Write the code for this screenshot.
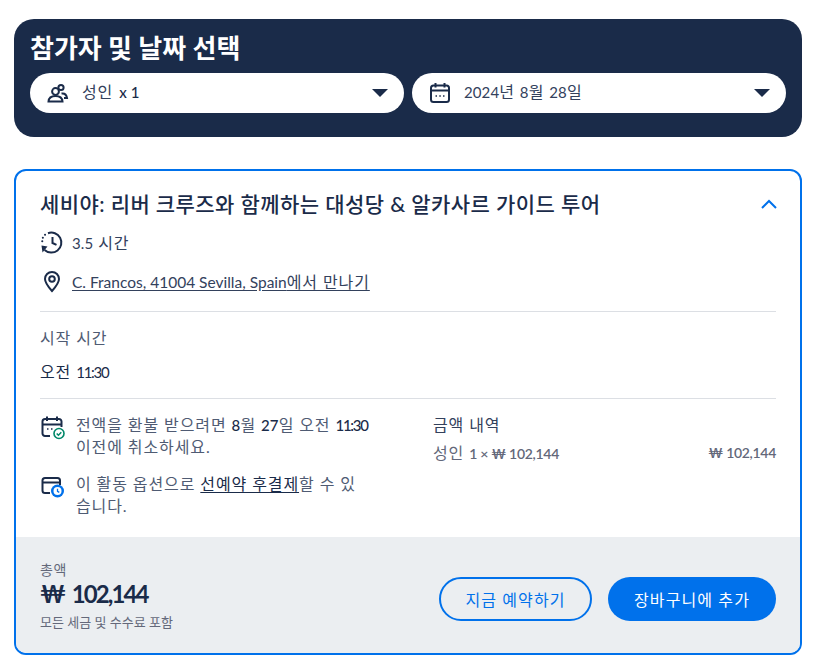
<main class="page">
  <section class="picker">
    <h2>참가자 및 날짜 선택</h2>
    <div class="pills">
      <div class="pill">
        <svg class="pill-ico" width="22" height="22" viewBox="0 0 22 22" fill="none" stroke="#1a2b49" stroke-width="2">
          <circle cx="8.500" cy="9.500" r="3.400"/>
          <circle cx="14" cy="5.500" r="2.600"/>
          <path d="M1.500 19.500c.3-3.800 3-5.500 7-5.500s6.700 1.700 7 5.500z"/>
          <path d="M14.500 11.500c3-.5 5 1.500 5.500 4.500h-3"/>
        </svg>
        <span class="pill-text">성인 <span class="n x">x 1</span></span>
        <span class="caret"></span>
      </div>
      <div class="pill">
        <svg class="pill-ico" width="22" height="22" viewBox="0 0 22 22" fill="none" stroke="#1a2b49" stroke-width="2">
          <rect x="2" y="3.500" width="18" height="16.500" rx="2.500"/>
          <path d="M2 8.500h18M6.500 1v4.500M15.500 1v4.500"/>
          <path d="M6.500 14h1.500M10.300 14h1.500M14 14h1.500" stroke-width="1.600"/>
        </svg>
        <span class="pill-text"><span class="n">2024</span>년 <span class="n">8</span>월 <span class="n">28</span>일</span>
        <span class="caret"></span>
      </div>
    </div>
  </section>

  <section class="card">
    <div class="body">
      <div class="title-row">
        <h3>세비야: 리버 크루즈와 함께하는 대성당 &amp; 알카사르 가이드 투어</h3>
        <svg width="18" height="10" viewBox="0 0 18 10" fill="none" stroke="#0071eb" stroke-width="2"><path d="M2 9l7-7 7 7"/></svg>
      </div>
      <div class="meta duration">
        <svg width="24" height="24" viewBox="0 0 24 24" fill="none" stroke="#1a2b49" stroke-width="2">
          <path d="M8 3.200A10 10 0 1 1 4.600 20" />
          <path d="M12.500 7v6l4 1.800"/>
          <path d="M2.200 11.200h.1M2.800 7.800h.1M5 4.800h.1" stroke-linecap="round"/>
          <path d="M1.500 15.500l6 1-5 6z" fill="#1a2b49" stroke="none"/>
        </svg>
        <span><span class="n">3.5</span> 시간</span>
      </div>
      <div class="meta place">
        <svg width="24" height="24" viewBox="0 0 24 24" fill="none" stroke="#1a2b49" stroke-width="2">
          <path d="M12 22c-4-4.500-7-8-7-12a7 7 0 0 1 14 0c0 4-3 7.500-7 12z"/>
          <circle cx="12" cy="10" r="2.800"/>
        </svg>
        <a href="#top"><span class="n addr">C. Francos, 41004 Sevilla, Spain</span>에서 만나기</a>
      </div>
      <hr class="first" />
      <div class="start">
        <div class="label">시작 시간</div>
        <div class="time">오전 <span class="n tight">11:30</span></div>
      </div>
      <hr class="second" />
      <div class="columns">
        <div class="notes">
          <div class="note">
            <svg width="26" height="26" viewBox="0 0 26 26" fill="none">
              <path d="M10 21H5a2.500 2.500 0 0 1-2.500-2.500V6.500A2.500 2.500 0 0 1 5 4h14a2.500 2.500 0 0 1 2.500 2.500V12M2.500 9.500h19M7 1.500v4.500M17 1.500v4.500" stroke="#1a2b49" stroke-width="2"/>
              <path d="M7 14h1.500M11 14h1.500" stroke="#1a2b49" stroke-width="1.600"/>
              <circle cx="19" cy="18.500" r="5" fill="#fff" stroke="#008768" stroke-width="1.600"/>
              <path d="M16.700 18.500l1.700 1.700 2.900-3" stroke="#008768" stroke-width="1.500"/>
            </svg>
            <p>전액을 환불 받으려면 <span class="n d">8</span>월 <span class="n d">27</span>일 오전 <span class="n d tight">11:30</span> 이전에 취소하세요.</p>
          </div>
          <div class="note">
            <svg width="26" height="26" viewBox="0 0 26 26" fill="none">
              <path d="M10 19H5a2.500 2.500 0 0 1-2.500-2.500v-10A2.500 2.500 0 0 1 5 4h12.500a2.500 2.500 0 0 1 2.500 2.500V11M2.500 8.500H20" stroke="#1a2b49" stroke-width="2"/>
              <circle cx="17.500" cy="17" r="6.500" fill="#0071eb"/>
              <circle cx="17.500" cy="17" r="4" fill="#fff"/>
              <path d="M17.500 14.800V17.400l1.800 1" stroke="#0071eb" stroke-width="1.300"/>
            </svg>
            <p>이 활동 옵션으로 <a href="#top">선예약 후결제</a>할 수 있습니다.</p>
          </div>
        </div>
        <div class="prices">
          <div class="price-title">금액 내역</div>
          <div class="price-row">
            <span>성인 <span class="n pr">1 × ₩ 102,144</span></span>
            <span class="n pr">₩ 102,144</span>
          </div>
        </div>
      </div>
    </div>
    <footer>
      <div class="total">
        <div class="total-label">총액</div>
        <div class="total-value">₩ <span class="digits">102,144</span></div>
        <div class="total-note">모든 세금 및 수수료 포함</div>
      </div>
      <div class="actions">
        <button class="outline">지금 예약하기</button>
        <button class="solid">장바구니에 추가</button>
      </div>
    </footer>
  </section>
</main>

<style>
  :global(body) {
    margin: 0;
    background: #fff;
  }
  .page {
    width: 788px;
    padding: 19px 0 0 14px;
    font-family: "Lato", "Noto Sans CJK KR", sans-serif;
    color: #1a2b49;
    font-size: 16px;
    letter-spacing: 0.9px;
  }
  .n {
    font-size: 15px;
    letter-spacing: 0.1px;
  }
  .tight {
    letter-spacing: -1.300px;
  }
  .picker {
    background: #1a2b49;
    border-radius: 20px;
    height: 118px;
    padding: 14px 16px 0;
    box-sizing: border-box;
  }
  h2 {
    margin: 0;
    color: #fff;
    font-size: 26px;
    font-weight: 700;
    line-height: 30px;
    height: 40px;
    letter-spacing: 0;
  }
  .pills {
    display: flex;
    gap: 8px;
  }
  .pill {
    flex: 1;
    height: 40px;
    background: #fff;
    border-radius: 20px;
    display: flex;
    align-items: center;
    padding: 0 16px 0 17px;
  }
  .pill-ico {
    flex: none;
    margin-right: 13px;
  }
  .pill-text {
    flex: 1;
    line-height: 20px;
    padding-bottom: 3px;
    color: #33415c;
  }
  .x {
    font-weight: 500;
    color: #1a2b49;
    margin-left: 1px;
  }
  .caret {
    width: 0;
    height: 0;
    border-left: 8px solid transparent;
    border-right: 8px solid transparent;
    border-top: 8px solid #1a2b49;
  }
  .card {
    margin-top: 32px;
    border: 2px solid #0071eb;
    border-radius: 12px;
    overflow: hidden;
    height: 486px;
    box-sizing: border-box;
    display: flex;
    flex-direction: column;
  }
  .body {
    flex: 1;
    padding: 0 24px;
  }
  .title-row {
    display: flex;
    justify-content: space-between;
    align-items: center;
    height: 30px;
    margin-top: 18px;
  }
  h3 {
    margin: 0;
    font-size: 21px;
    font-weight: 500;
    line-height: 30px;
    letter-spacing: 0.42px;
    color: #1a2b49;
  }
  .title-row svg {
    margin-right: -2px;
  }
  .meta {
    display: flex;
    align-items: center;
    gap: 8px;
    height: 24px;
    color: #33415c;
  }
  .duration {
    margin-top: 11px;
  }
  .place {
    margin-top: 15px;
  }
  .addr {
    font-size: 15.500px;
    letter-spacing: 0;
  }
  .meta svg {
    flex: none;
    width: 24px;
    height: 24px;
  }
  a {
    color: inherit;
    text-decoration: underline;
    text-underline-offset: 2px;
  }
  hr {
    border: 0;
    border-top: 1px solid #dcdfe4;
    margin: 0;
  }
  hr.first {
    margin-top: 18px;
  }
  .start {
    padding-top: 16px;
  }
  .label {
    line-height: 20px;
    color: #4f5b73;
  }
  .time {
    margin-top: 14px;
    line-height: 20px;
    color: #1a2b49;
  }
  hr.second {
    margin-top: 16px;
  }
  .columns {
    display: flex;
    margin-top: 15px;
  }
  .notes {
    width: 331px;
    margin-right: 62px;
    flex: none;
  }
  .note {
    display: flex;
    gap: 10px;
    margin-bottom: 15px;
  }
  .note svg {
    flex: none;
    margin-top: 1px;
  }
  .note p {
    margin: 0;
    line-height: 22px;
    color: #4f5b73;
    word-break: break-all;
  }
  .d {
    font-weight: 500;
    color: #1a2b49;
  }
  .note a {
    color: #1a2b49;
  }
  .prices {
    flex: 1;
  }
  .price-title {
    line-height: 22px;
    color: #33415c;
  }
  .price-row {
    display: flex;
    justify-content: space-between;
    margin-top: 7px;
    line-height: 20px;
    color: #63687a;
  }
  .pr {
    font-size: 14px;
    font-weight: 600;
    letter-spacing: -0.3px;
  }
  footer {
    height: 116px;
    flex: none;
    background: #ebeef1;
    display: flex;
    justify-content: space-between;
    align-items: center;
    padding: 0 24px;
  }
  .total-label {
    font-size: 14px;
    letter-spacing: 0.5px;
    line-height: 18px;
    color: #63687a;
  }
  .total-value {
    font-size: 24px;
    font-weight: 700;
    letter-spacing: 0;
    line-height: 30px;
    color: #1a2b49;
  }
  .digits {
    letter-spacing: -1.900px;
  }
  .total-note {
    margin-top: 5px;
    font-size: 13px;
    letter-spacing: 0;
    line-height: 16px;
    color: #63687a;
  }
  .actions {
    display: flex;
    gap: 16px;
    margin-top: 8px;
  }
  button {
    height: 44px;
    border-radius: 22px;
    font-family: inherit;
    font-size: 16px;
    letter-spacing: 1.100px;
    box-sizing: border-box;
    padding: 0;
  }
  .outline {
    width: 153px;
    background: transparent;
    border: 2px solid #0071eb;
    color: #0071eb;
  }
  .solid {
    width: 168px;
    background: #0071eb;
    border: 0;
    color: #fff;
  }
</style>
